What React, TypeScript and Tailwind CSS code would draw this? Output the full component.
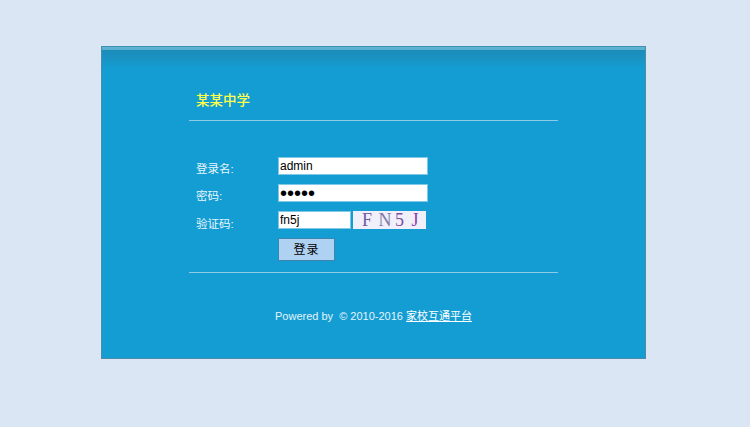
export default function App() {
  return (
    <div className="h-[427px] w-[750px] overflow-hidden bg-[#dae6f4] pt-[46px] pl-[101px] font-['Liberation_Sans','Noto_Sans_CJK_SC',sans-serif]">
      <div className="flex h-[313px] w-[545px] flex-col border border-t-0 border-[#4d8ca8] bg-[#139dd2] bg-[linear-gradient(#3f8fb0_0px,#3f8fb0_1px,#62b4d4_1px,#58aed0_4px,#1b8dbb_4px,#1a92c2_12px,#139dd2_22px)]">
        <div className="mt-[42px] mr-[87px] ml-[87px] h-[33px] border-b border-[#8fcbe4] pl-[7px] text-[13.5px] leading-[25px] font-medium text-[#ffff4d]">某某中学</div>
        <div className="mr-[87px] ml-[87px] flex h-[152px] flex-col border-b border-[#8fcbe4] pt-[36px] pl-[7px] text-[11.5px] text-[#e8f6fc]">
          <div className="flex h-[18px] items-center">
            <span className="mt-[8px] w-[82px]">登录名:</span>
            <input readOnly value="admin" className="h-[18px] w-[150px] border border-[#7fc8e8] bg-white px-[1px] text-[12px] text-black outline-none" />
          </div>
          <div className="mt-[9px] flex h-[18px] items-center">
            <span className="mt-[8px] w-[82px]">密码:</span>
            <input readOnly type="password" value="admin" className="h-[18px] w-[150px] border border-[#7fc8e8] bg-white px-[1px] text-[20px] leading-none text-black outline-none" />
          </div>
          <div className="mt-[9px] flex h-[18px] items-center">
            <span className="mt-[10px] w-[82px]">验证码:</span>
            <input readOnly value="fn5j" className="h-[18px] w-[73px] border border-[#7fc8e8] bg-white px-[1px] text-[12px] text-black outline-none" />
            <div className="ml-[2px] flex h-[18px] w-[73px] items-center bg-[#f0effa] pl-[9px] font-['Liberation_Serif',serif] text-[18px] leading-none font-light">
              <span className="w-[16.5px] text-[#6f5a9f]">F</span>
              <span className="w-[16.5px] text-[#7f7aa8]">N</span>
              <span className="w-[16.5px] text-[#7a4fa0]">5</span>
              <span className="w-[10px] text-[#8a3fa8]">J</span>
            </div>
          </div>
          <button className="mt-[9px] ml-[82px] h-[23px] w-[57px] border border-[#3d85ad] bg-[#b0d2f2] text-[12px] tracking-[1px] text-black">登录</button>
        </div>
        <div className="mt-[35px] flex justify-center text-[11px] leading-[16px] text-[#e4f4fb]">
          <span>Powered by &nbsp;© 2010-2016 <a className="text-white underline">家校互通平台</a></span>
        </div>
      </div>
    </div>
  );
}
